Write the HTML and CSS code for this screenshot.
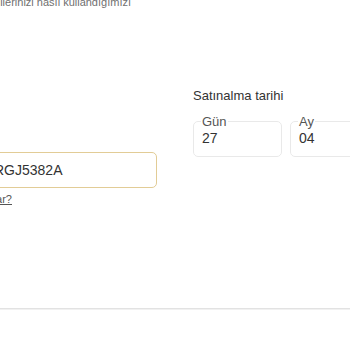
FILE: index.html
```html
<!DOCTYPE html>
<html lang="tr">
<head>
<meta charset="utf-8">
<link rel="stylesheet" href="styles.css">
</head>
<body>
<div class="page">
  <div class="notice"><p>Kişisel bilgilerinizi nasıl kullandığımızı</p></div>
  <div class="form-grid">
    <div class="left-col">
      <div class="input-wrap"><input class="text-input" type="text" value="RGJ5382A"></div>
      <div class="help-wrap"><a class="help-link" href="#">Bu ne işe yarar?</a></div>
    </div>
    <div class="right-col">
      <div class="date-label">Satınalma tarihi</div>
      <div class="date-row">
        <fieldset class="date-box"><legend>Gün</legend><div class="date-value">27</div></fieldset>
        <fieldset class="date-box"><legend>Ay</legend><div class="date-value">04</div></fieldset>
      </div>
    </div>
  </div>
  <div class="divider"></div>
</div>
</body>
</html>
```
FILE: styles.css
```css
html, body {
  margin: 0;
  padding: 0;
  background: #ffffff;
  overflow: hidden;
}
body {
  width: 350px;
  height: 350px;
  font-family: "Liberation Sans", Arial, sans-serif;
  color: #333333;
}
.page {
  width: 350px;
}
.notice {
  display: flex;
  justify-content: flex-end;
  width: 131px;
  margin-top: -4px;
}
.notice p {
  margin: 0;
  flex: none;
  white-space: nowrap;
  font-size: 11px;
  line-height: 13px;
  color: #707070;
}
.form-grid {
  display: grid;
  grid-template-columns: 157px 157px;
  column-gap: 36px;
  height: 199px;
}
.left-col {
  display: flex;
  flex-direction: column;
  align-items: flex-end;
  margin-top: 143px;
}
.input-wrap {
  display: flex;
  justify-content: flex-end;
  width: 157px;
}
.text-input {
  flex: none;
  box-sizing: border-box;
  width: 200px;
  height: 36px;
  margin: 0;
  padding: 0 12px 0 36px;
  border: 1px solid #e2cc96;
  border-radius: 5px;
  font-family: "Liberation Sans", Arial, sans-serif;
  font-size: 14px;
  color: #333333;
  background: #ffffff;
  outline: none;
}
.help-wrap {
  display: flex;
  justify-content: flex-end;
  width: 157px;
  margin-top: 4px;
}
.help-link {
  flex: none;
  font-size: 11px;
  line-height: 14px;
  color: #555555;
  text-decoration: underline;
  white-space: nowrap;
  margin-right: 145px;
}
.right-col {
  margin-top: 79px;
}
.date-label {
  font-size: 13px;
  line-height: 16px;
  color: #333333;
  margin-bottom: 10px;
}
.date-row {
  display: flex;
  gap: 8px;
}
.date-box {
  box-sizing: border-box;
  width: 89px;
  flex: none;
  margin: 0;
  padding: 0 7px 9px 7px;
  border: 1px solid #e9e9e9;
  border-radius: 5px;
  min-inline-size: 0;
}
.date-box legend {
  padding: 0 1px;
  font-size: 13px;
  line-height: 15px;
  color: #555555;
}
.date-value {
  font-size: 14px;
  line-height: 18px;
  color: #333333;
  padding-left: 1px;
}
.divider {
  margin-top: 100px;
  border-top: 1px solid #e2e2e2;
  height: 1px;
  background: #f1f1f1;
}
```
